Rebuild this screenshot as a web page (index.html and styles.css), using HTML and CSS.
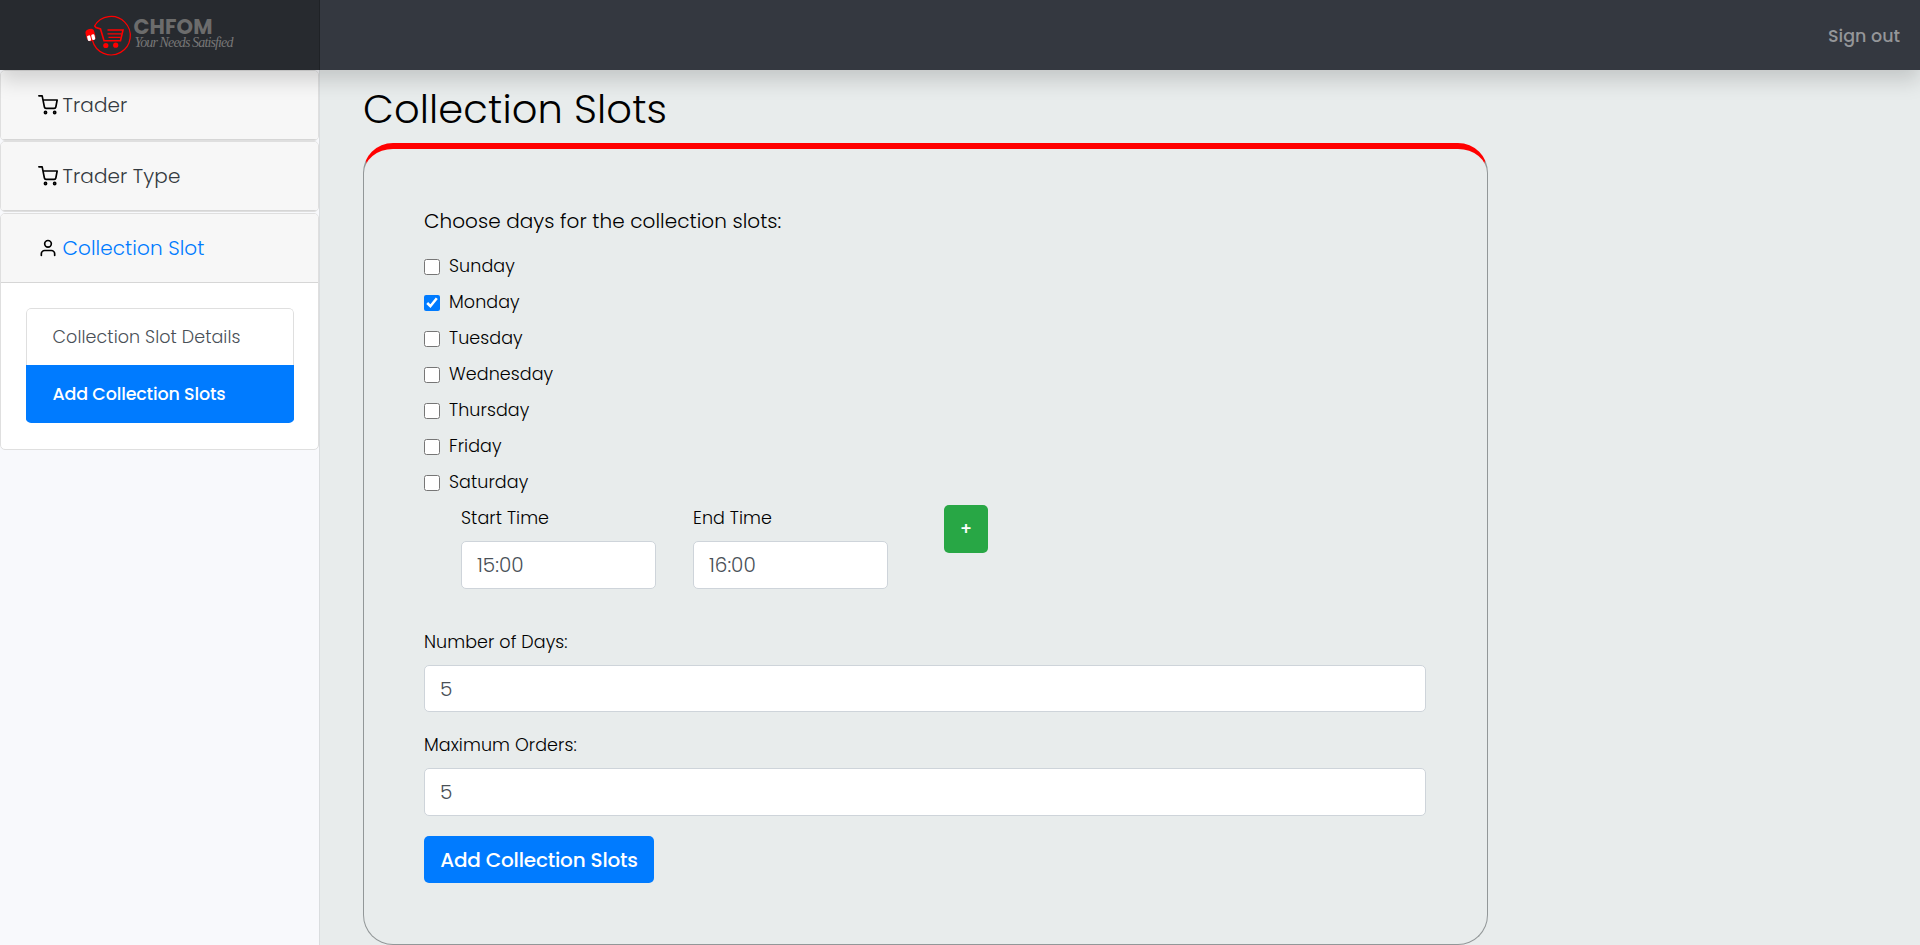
FILE: index.html
```html
<!DOCTYPE html>
<html lang="en">
<head>
<meta charset="utf-8">
<title>Collection Slots</title>
<link rel="stylesheet" href="styles.css">
</head>
<body>
<header class="topbar">
  <a class="brand">
    <svg class="brand-logo" viewBox="0 0 150 42" width="150" height="42">
      <g fill="none" stroke="#f00" stroke-width="1.2">
        <path d="M9.500 12A19.200 19.200 0 1 1 7.500 26.500"/>
        <path d="M9.500 11.700 11 13.500 15.500 15 19 26.800H35.500L38 16H22.500" stroke-width="1.600"/>
        <path d="M22.500 19.800H36.500M23.500 23.400H35.500" stroke-width="1.300"/>
      </g>
      <circle cx="20.800" cy="31.500" r="2.600" fill="#f00"/>
      <circle cx="30.700" cy="31.200" r="2.600" fill="#f00"/>
      <g transform="rotate(-14 5.500 21)">
        <rect x="1" y="15" width="9" height="12" rx="4" fill="#f00"/>
        <rect x="1.700" y="21" width="3.300" height="5.500" rx="1.200" fill="#fff"/>
        <rect x="6" y="21" width="3.300" height="5.500" rx="1.200" fill="#fff"/>
      </g>
      <text class="logo-name" x="48.500" y="20" textLength="79">CHFOM</text>
      <text class="logo-tag" x="49.500" y="33" textLength="99">Your Needs Satisfied</text>
    </svg>
  </a>
  <a class="signout">Sign out</a>
</header>
<div class="layout">
  <nav class="sidebar">
    <section class="card">
      <div class="card-head">
        <svg class="icon" viewBox="0 0 24 24"><circle cx="9" cy="21" r="1.300"/><circle cx="20" cy="21" r="1.300"/><path d="M1 1h4l2.680 13.390a2 2 0 0 0 2 1.610h9.720a2 2 0 0 0 2-1.610L23 6H6"/></svg>
        <span>Trader</span>
      </div>
    </section>
    <section class="card">
      <div class="card-head">
        <svg class="icon" viewBox="0 0 24 24"><circle cx="9" cy="21" r="1.300"/><circle cx="20" cy="21" r="1.300"/><path d="M1 1h4l2.680 13.390a2 2 0 0 0 2 1.610h9.720a2 2 0 0 0 2-1.610L23 6H6"/></svg>
        <span>Trader Type</span>
      </div>
    </section>
    <section class="card">
      <div class="card-head card-head-open">
        <svg class="icon" viewBox="0 0 24 24"><path d="M20 21v-2a4 4 0 0 0-4-4H8a4 4 0 0 0-4 4v2"/><circle cx="12" cy="7" r="4"/></svg>
        <span>Collection Slot</span>
      </div>
      <div class="card-body">
        <div class="list">
          <a class="item">Collection Slot Details</a>
          <a class="item item-active">Add Collection Slots</a>
        </div>
      </div>
    </section>
  </nav>
  <main class="main">
    <h1 class="title">Collection Slots</h1>
    <form class="panel">
      <p class="lead">Choose days for the collection slots:</p>
      <label class="day"><input class="check" type="checkbox">Sunday</label>
      <label class="day"><input class="check" type="checkbox" checked>Monday</label>
      <label class="day"><input class="check" type="checkbox">Tuesday</label>
      <label class="day"><input class="check" type="checkbox">Wednesday</label>
      <label class="day"><input class="check" type="checkbox">Thursday</label>
      <label class="day"><input class="check" type="checkbox">Friday</label>
      <label class="day"><input class="check" type="checkbox">Saturday</label>
      <div class="times">
        <div class="time"><label class="label">Start Time</label><div class="field">15:00</div></div>
        <div class="time"><label class="label">End Time</label><div class="field">16:00</div></div>
        <button class="plus" type="button">+</button>
      </div>
      <div class="group"><label class="label">Number of Days:</label><div class="field field-days">5</div></div>
      <div class="group"><label class="label">Maximum Orders:</label><div class="field">5</div></div>
      <button class="submit" type="button">Add Collection Slots</button>
    </form>
  </main>
</div>
</body>
</html>
```
FILE: styles.css
```css
*{box-sizing:border-box}
body{margin:0;height:945px;overflow:hidden;background:#e8ecec;color:#000;font-family:Poppins,Inter,sans-serif;font-weight:300;font-size:17.5px;letter-spacing:.08px}
.topbar{position:relative;z-index:2;height:70px;background:#343840;display:flex;justify-content:space-between;align-items:center;box-shadow:0 10px 20px rgba(0,0,0,.16)}
.brand{width:320px;height:70px;background:#272a2f;border-right:1px solid #1f2226;display:flex;align-items:center;padding-left:85px}
.brand-logo{display:block;overflow:visible}
.logo-name{font:700 21px Poppins,Inter,sans-serif;fill:#6c6c6c}
.logo-tag{font:italic 300 14px "Z003","URW Chancery L","Liberation Serif",cursive;fill:#777}
.signout{padding:2px 20px 0 0;color:#949699;font-weight:500;letter-spacing:0}
.layout{display:flex;height:875px}
.sidebar{width:320px;flex:none;background:#f8f9fc;border-right:1px solid #dadddf;display:flex;flex-direction:column;gap:.8px}
.card{border:1px solid #dfdfdf;border-radius:5px;background:#fff;overflow:hidden}
.card-head{height:68.6px;background:#f7f7f7;border-bottom:1px solid #d6d6d6;padding-left:37px;display:flex;align-items:center;gap:4.5px;color:#343a40;font-size:20px}
.card-head-open{color:#007bff;height:69px}
.icon{width:20px;height:20px;fill:none;stroke:#000;stroke-width:2;stroke-linecap:round;stroke-linejoin:round}
.card-body{padding:25px 24px 26px 25px}
.list{border-radius:5px;overflow:hidden}
.item{height:57px;border:1px solid #dfdfdf;border-bottom:0;border-radius:5px 5px 0 0;padding-left:25.5px;display:flex;align-items:center;color:#495057}
.item-active{height:58px;padding-bottom:1px;background:#007bff;border-color:#007bff;border-radius:0;color:#fff;font-weight:500;letter-spacing:-.16px}
.main{flex:1;padding:15px 0 0 43px}
.title{margin:0 0 10px;font-size:40px;line-height:48px;font-weight:300;letter-spacing:.13px}
.panel{width:1125px;height:802px;border:1px solid #929798;border-top:6px solid #f00;border-radius:30px;padding:57px 61px 0 60px}
.lead{margin:0 0 12px;font-size:20px;line-height:30px;letter-spacing:.05px}
.day{display:flex;height:36px;align-items:center;gap:9px}
.check{width:16px;height:16px;margin:2px 0 0;accent-color:#007bff}
.times{display:flex;gap:37px;padding-left:37px;height:124px;margin-top:5px}
.time{width:195px}
.label{display:block;line-height:26px;padding-bottom:10px}
.field{height:48px;border:1px solid #ced4da;border-radius:5px;background:#fff;color:#495057;font-size:20px;line-height:46px;letter-spacing:0;padding-left:15px}
.field-days{height:47px}
.plus{width:44px;height:48px;margin-left:19px;border:0;border-radius:5px;background:#28a745;color:#fff;font:500 17.5px Poppins,Inter,sans-serif}
.group{margin-bottom:20px}
.submit{height:47px;width:230px;padding:0;border:0;border-radius:5px;background:#007bff;color:#fff;font:500 20px Poppins,Inter,sans-serif;letter-spacing:-.18px}
```
